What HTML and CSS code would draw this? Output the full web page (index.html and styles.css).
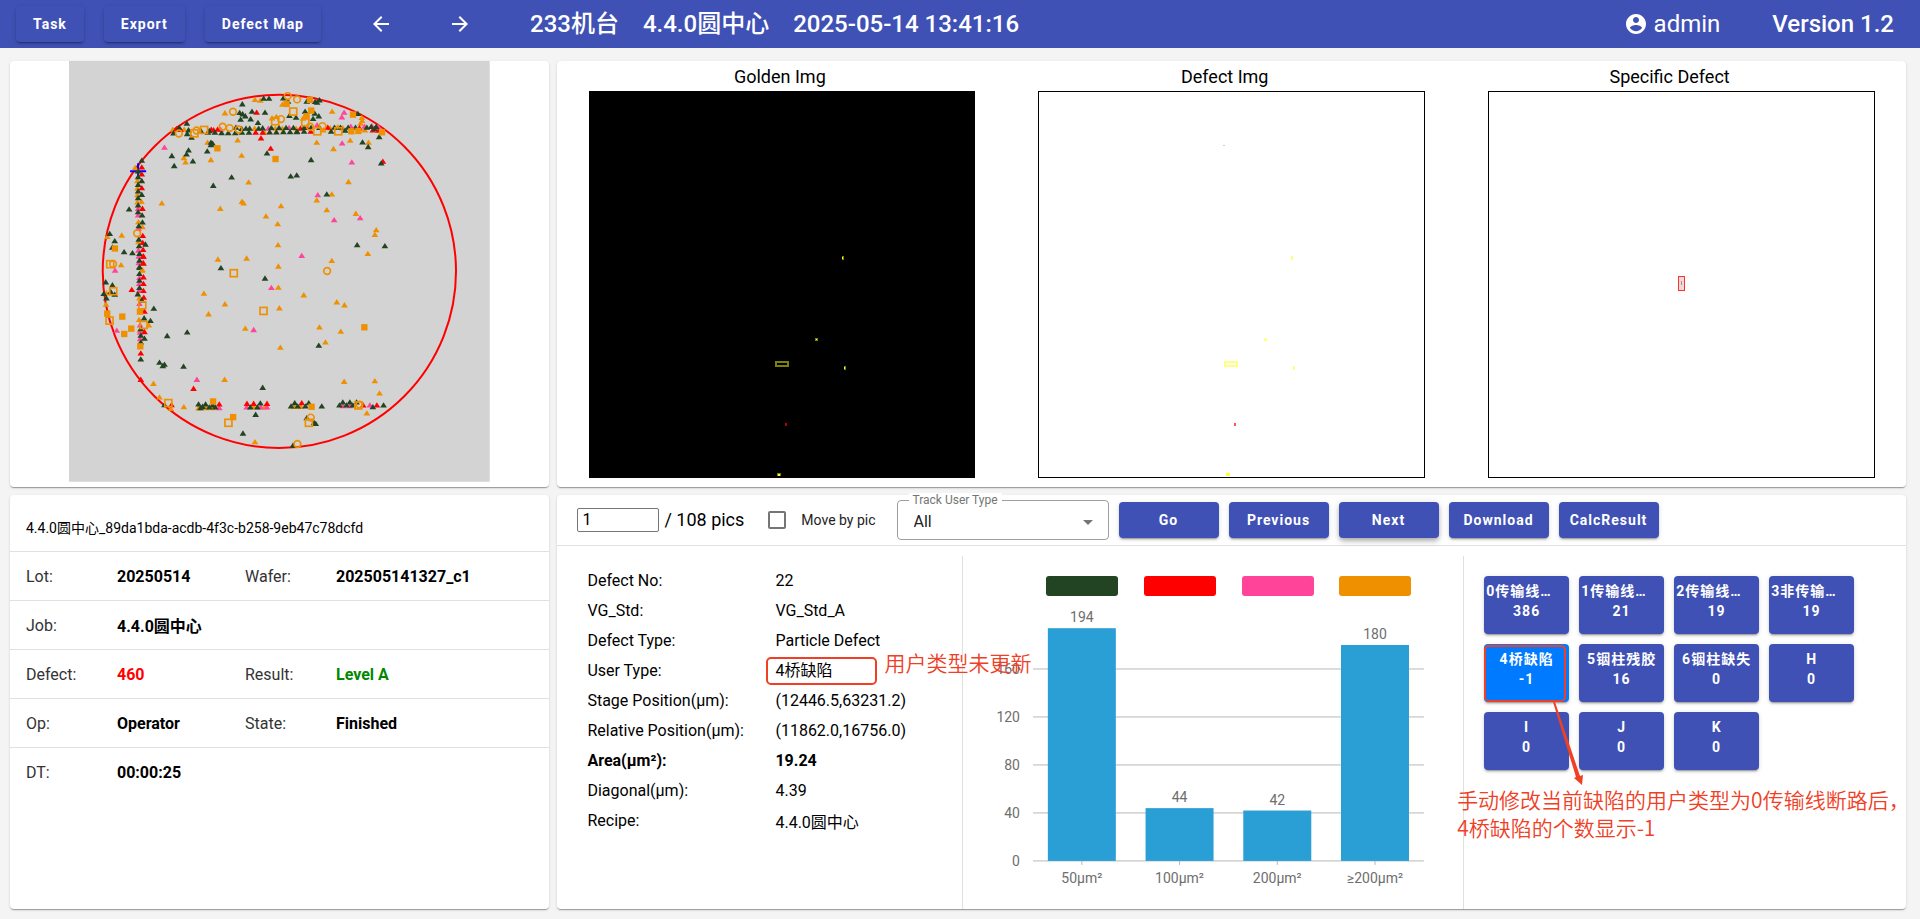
FILE: index.html
```html
<!DOCTYPE html>
<html lang="zh-CN">
<head>
  <meta charset="UTF-8">
  <meta name="viewport" content="width=device-width, initial-scale=1">
  <title>Defect Review</title>
  <link rel="stylesheet" href="styles.css">
</head>
<body>

  <!-- Top bar -->
  <header class="topbar">
    <nav class="topbar-nav">
      <button class="btn">Task</button>
      <button class="btn">Export</button>
      <button class="btn">Defect Map</button>
    </nav>
    <button class="icon-btn" aria-label="Previous page">
      <svg viewBox="0 0 24 24"><path d="M20 11H7.83l5.59-5.59L12 4l-8 8 8 8 1.41-1.41L7.83 13H20v-2z"/></svg>
    </button>
    <button class="icon-btn" aria-label="Next page">
      <svg viewBox="0 0 24 24"><path d="M12 4l-1.41 1.41L16.17 11H4v2h12.17l-5.58 5.59L12 20l8-8z"/></svg>
    </button>
    <h1 class="topbar-title"><span>233机台</span><span>4.4.0圆中心</span><span>2025-05-14 13:41:16</span></h1>
    <div class="user">
      <svg viewBox="0 0 24 24"><path d="M12 2C6.48 2 2 6.48 2 12s4.48 10 10 10 10-4.48 10-10S17.52 2 12 2zm0 3c1.66 0 3 1.34 3 3s-1.34 3-3 3-3-1.34-3-3 1.34-3 3-3zm0 14.2c-2.5 0-4.71-1.28-6-3.22.03-1.99 4-3.08 6-3.08 1.99 0 5.97 1.09 6 3.08-1.29 1.94-3.5 3.22-6 3.22z"/></svg>
      <span>admin</span>
    </div>
    <strong class="version">Version 1.2</strong>
  </header>

  <main class="board">

    <!-- Wafer map -->
    <section class="card wafer-card">
      <svg class="wafer" id="wafer" viewBox="0 0 1260 1260">
        <rect class="wafer-bg" width="1260" height="1260"/>
        <circle class="wafer-edge" cx="630" cy="630" r="529"/>
        <path class="wafer-cursor" d="M183 330h48M207 306v48"/>
      </svg>
    </section>

    <!-- Images -->
    <section class="card">
      <div class="captions">
        <span>Golden Img</span>
        <span>Defect Img</span>
        <span>Specific Defect</span>
      </div>
      <div class="images">
        <svg class="golden" viewBox="0 0 386 386" shape-rendering="crispEdges">
          <rect class="dim" x="253" y="165" width="2" height="4"/>
          <rect class="lit" x="253" y="166" width="1" height="2"/>
          <rect class="dim" x="226" y="247" width="3" height="3"/>
          <rect class="lit" x="227" y="248" width="1" height="1"/>
          <rect class="frame" x="187" y="271" width="12" height="4"/>
          <rect class="dim" x="255" y="275" width="2" height="4"/>
          <rect class="lit" x="255" y="276" width="1" height="2"/>
          <rect class="hot" x="196" y="332" width="2" height="3"/>
          <rect class="dim" x="188" y="382" width="4" height="3"/>
          <rect class="lit" x="189" y="383" width="2" height="2"/>
        </svg>
        <svg class="defect" viewBox="0 0 386 386" shape-rendering="crispEdges">
          <rect class="mote" x="185" y="53" width="2" height="1"/>
          <rect class="dim" x="253" y="165" width="2" height="4"/>
          <rect class="lit" x="253" y="166" width="1" height="2"/>
          <rect class="dim" x="226" y="247" width="3" height="3"/>
          <rect class="lit" x="227" y="248" width="1" height="1"/>
          <rect class="frame" x="187" y="271" width="12" height="4"/>
          <rect class="dim" x="255" y="275" width="2" height="4"/>
          <rect class="lit" x="255" y="276" width="1" height="2"/>
          <rect class="hot" x="196" y="332" width="2" height="3"/>
          <rect class="lit" x="188" y="382" width="4" height="3"/>
        </svg>
        <svg class="specific" viewBox="0 0 386 386" shape-rendering="crispEdges">
          <rect x="190" y="185" width="6" height="14"/>
          <path d="M193 190v4"/>
        </svg>
      </div>
    </section>

    <!-- Lot information -->
    <section class="card">
      <table class="lot">
        <colgroup><col class="c1"><col class="c2"><col class="c3"><col></colgroup>
        <tr class="lot-id"><td colspan="4">4.4.0圆中心_89da1bda-acdb-4f3c-b258-9eb47c78dcfd</td></tr>
        <tr><th>Lot:</th><td>20250514</td><th>Wafer:</th><td>202505141327_c1</td></tr>
        <tr><th>Job:</th><td colspan="3">4.4.0圆中心</td></tr>
        <tr><th>Defect:</th><td class="bad">460</td><th>Result:</th><td class="good">Level A</td></tr>
        <tr><th>Op:</th><td>Operator</td><th>State:</th><td>Finished</td></tr>
        <tr><th>DT:</th><td colspan="3">00:00:25</td></tr>
      </table>
    </section>

    <section class="card review">
      <!-- Toolbar -->
      <div class="toolbar">
        <input class="page-input" id="page" type="text" value="1">
        <label class="page-total" for="page">/ 108 pics</label>
        <input class="move-check" id="move" type="checkbox">
        <label class="move-label" for="move">Move by pic</label>
        <div class="select-box">
          <label for="track">Track User Type</label>
          <select id="track"><option>All</option></select>
          <svg viewBox="0 0 10 5"><path d="M0 0h10L5 5z"/></svg>
        </div>
        <div class="actions">
          <button class="btn">Go</button>
          <button class="btn">Previous</button>
          <button class="btn raised">Next</button>
          <button class="btn">Download</button>
          <button class="btn">CalcResult</button>
        </div>
      </div>

      <div class="panels">
        <!-- Current defect -->
        <div class="panel">
          <table class="detail">
            <tr><th>Defect No:</th><td>22</td></tr>
            <tr><th>VG_Std:</th><td>VG_Std_A</td></tr>
            <tr><th>Defect Type:</th><td>Particle Defect</td></tr>
            <tr><th>User Type:</th><td><div class="marked">4桥缺陷<span class="note note-type">用户类型未更新</span></div></td></tr>
            <tr><th>Stage Position(μm):</th><td>(12446.5,63231.2)</td></tr>
            <tr><th>Relative Position(μm):</th><td>(11862.0,16756.0)</td></tr>
            <tr class="strong"><th>Area(μm²):</th><td>19.24</td></tr>
            <tr><th>Diagonal(μm):</th><td>4.39</td></tr>
            <tr><th>Recipe:</th><td>4.4.0圆中心</td></tr>
          </table>
        </div>

        <!-- Size chart -->
        <div class="panel">
          <div class="swatches">
            <span class="swatch green"></span>
            <span class="swatch red"></span>
            <span class="swatch pink"></span>
            <span class="swatch orange"></span>
          </div>
          <svg class="chart" id="chart" viewBox="0 0 500 300"></svg>
        </div>

        <!-- User types -->
        <div class="panel">
          <div class="types">
            <button class="type long"><span>0传输线…</span><span>386</span></button>
            <button class="type long"><span>1传输线…</span><span>21</span></button>
            <button class="type long"><span>2传输线…</span><span>19</span></button>
            <button class="type long"><span>3非传输…</span><span>19</span></button>
            <button class="type active"><span>4桥缺陷</span><span>-1</span></button>
            <button class="type"><span>5铟柱残胶</span><span>16</span></button>
            <button class="type"><span>6铟柱缺失</span><span>0</span></button>
            <button class="type"><span>H</span><span>0</span></button>
            <button class="type"><span>I</span><span>0</span></button>
            <button class="type"><span>J</span><span>0</span></button>
            <button class="type"><span>K</span><span>0</span></button>
            <svg class="arrow" viewBox="0 0 32 84"><path d="M0 0h2l25 74 3-1-1 10-8-7 2-1z"/></svg>
          </div>
          <p class="note note-count">手动修改当前缺陷的用户类型为0传输线断路后，<br>4桥缺陷的个数显示-1</p>
        </div>
      </div>
    </section>
  </main>

  <script src="script.js"></script>
</body>
</html>
```
FILE: styles.css
```css
* {
  box-sizing: border-box;
}

body {
  margin: 0;
  min-height: 100vh;
  display: flex;
  flex-direction: column;
  background: #f4f4f4;
  color: #000;
  font-family: Roboto, "Noto Sans CJK SC", sans-serif;
  font-size: 16px;
}

button, input, select {
  font-family: inherit;
}

/* top bar */
.topbar {
  display: flex;
  align-items: center;
  height: 48px;
  padding: 0 26px 0 16px;
  background: #3f51b5;
  color: #fff;
  font-size: 24px;
}

.topbar-nav {
  display: flex;
  gap: 20px;
  margin-right: 48px;
}

.btn {
  height: 36px;
  padding: 0 17px;
  border: none;
  border-radius: 4px;
  background: #3f51b5;
  color: #fff;
  font-size: 14px;
  font-weight: 700;
  letter-spacing: 1px;
  box-shadow: 0 3px 1px -2px rgba(0, 0, 0, 0.2), 0 2px 2px rgba(0, 0, 0, 0.14), 0 1px 5px rgba(0, 0, 0, 0.12);
}

.icon-btn {
  width: 24px;
  height: 24px;
  margin-right: 55px;
  padding: 0;
  border: none;
  background: none;
}

.icon-btn svg, .user svg {
  display: block;
  width: 24px;
  height: 24px;
  fill: #fff;
}

.topbar-title {
  display: flex;
  align-items: baseline;
  gap: 24px;
  margin: 0 auto 0 3px;
  font-size: 24px;
  font-weight: 500;
  line-height: 32px;
}

.user {
  display: flex;
  align-items: center;
  gap: 6px;
  margin-right: 52px;
}

.version {
  font-weight: 500;
}

/* four cards */
.board {
  flex: 1;
  display: grid;
  grid-template-columns: 2fr 5fr;
  grid-template-rows: auto 1fr;
  gap: 8px;
  padding: 13px 14px 10px 10px;
}

.card {
  min-width: 0;
  background: #fff;
  border-radius: 4px;
  box-shadow: 0 2px 1px -1px rgba(0, 0, 0, 0.2), 0 1px 1px rgba(0, 0, 0, 0.14), 0 1px 3px rgba(0, 0, 0, 0.12);
}

.wafer-card {
  padding-bottom: 5px;
}

.wafer {
  display: block;
  width: 78%;
  margin: 0 auto;
}

.wafer-bg {
  fill: #d3d3d3;
}

.wafer-edge {
  fill: none;
  stroke: #f00;
  stroke-width: 6;
}

.wafer-cursor {
  stroke: #00f;
  stroke-width: 6;
}

.green { fill: #224422; background: #224422; }
.red { fill: #ff0000; background: #ff0000; }
.pink { fill: #ff4499; background: #ff4499; }
.orange { fill: #ee9000; background: #ee9000; }

.hollow {
  fill: none;
  stroke: #ee9000;
  stroke-width: 5;
}

/* images */
.captions, .images {
  display: grid;
  grid-template-columns: repeat(3, 1fr);
  justify-items: center;
}

.captions {
  padding: 2px 14px 0 0;
  font-size: 18px;
  line-height: 28px;
}

.images svg {
  display: block;
  width: 86%;
  border: 1px solid #000;
}

.golden { background: #000; }
.golden .dim { fill: #7f7f00; }
.golden .lit { fill: #ffff33; }
.golden .hot { fill: #b00000; }
.golden .frame { fill: none; stroke: #7f7f00; stroke-width: 2; }

.defect .dim { fill: #ffff99; }
.defect .lit { fill: #ffff33; }
.defect .hot { fill: #ff5555; }
.defect .mote { fill: #cccccc; }
.defect .frame { fill: none; stroke: #ffff80; stroke-width: 2; }

.specific rect { fill: #f3d8d8; stroke: #ff3030; }
.specific path { stroke: #999; }

/* lot information */
.lot {
  width: 100%;
  border-collapse: collapse;
  table-layout: fixed;
}

.lot .c1 { width: 107px; }
.lot .c2 { width: 128px; }
.lot .c3 { width: 91px; }

.lot tr {
  height: 49px;
  border-bottom: 1px solid #e0e0e0;
}

.lot tr:last-child {
  border-bottom: none;
}

.lot th, .lot td {
  padding: 0;
  text-align: left;
}

.lot th {
  font-weight: 400;
  color: #333;
}

.lot td {
  font-weight: 700;
}

.lot th:first-child {
  padding-left: 16px;
}

.lot .lot-id {
  height: 57px;
}

.lot .lot-id td {
  padding: 8px 0 0 16px;
  font-size: 14px;
  font-weight: 400;
}

.lot .bad { color: #f00; }
.lot .good { color: #008800; }

/* toolbar */
.review {
  display: flex;
  flex-direction: column;
}

.toolbar {
  display: flex;
  align-items: center;
  height: 51px;
  padding-left: 20px;
  border-bottom: 1px solid #e0e0e0;
}

.page-input {
  width: 82px;
  height: 24px;
  padding: 1px 4px;
  border: 1px solid #767676;
  border-radius: 2px;
  font-size: 16px;
}

.page-total {
  margin: 0 24px 0 5px;
  font-size: 18px;
}

.move-check {
  appearance: none;
  width: 18px;
  height: 18px;
  margin: 0 15px 0 0;
  border: 2px solid #757575;
  border-radius: 2px;
}

.move-check:checked {
  background: #3f51b5;
}

.move-label {
  margin-right: 21px;
  font-size: 14px;
  color: #222;
}

.select-box {
  position: relative;
  width: 212px;
  margin-right: 10px;
}

.select-box label {
  position: absolute;
  top: -7px;
  left: 12px;
  padding: 0 4px;
  background: #fff;
  color: #757575;
  font-size: 12px;
  line-height: 14px;
}

.select-box select {
  appearance: none;
  display: block;
  width: 100%;
  height: 40px;
  padding: 3px 16px 0;
  border: 1px solid #9e9e9e;
  border-radius: 4px;
  background: #fff;
  color: #222;
  font-size: 16px;
}

.select-box svg {
  position: absolute;
  top: 20px;
  right: 16px;
  width: 10px;
  height: 5px;
  fill: #757575;
}

.actions {
  display: flex;
  gap: 10px;
}

.actions .btn {
  width: 100px;
  padding: 0;
}

.actions .raised {
  box-shadow: 0 2px 4px -1px rgba(0, 0, 0, 0.2), 0 4px 5px rgba(0, 0, 0, 0.14), 0 1px 10px rgba(0, 0, 0, 0.12);
}

/* lower panels */
.panels {
  flex: 1;
  display: grid;
  grid-template-columns: 405fr 501fr 443fr;
  padding-top: 10px;
}

.panel {
  position: relative;
  min-width: 0;
  padding-top: 20px;
  border-left: 1px solid #e0e0e0;
}

.panel:first-child {
  padding: 10px 0 0 30px;
  border-left: none;
}

.detail {
  border-collapse: collapse;
}

.detail tr {
  height: 30px;
}

.detail th, .detail td {
  padding: 0;
  font-weight: 400;
  text-align: left;
  white-space: nowrap;
}

.detail th {
  width: 188px;
}

.detail .strong th, .detail .strong td {
  font-weight: 700;
}

.marked {
  position: relative;
  width: 111px;
  height: 28px;
  margin-left: -9px;
  padding-left: 7px;
  border: 2px solid #ef4026;
  border-radius: 5px;
  line-height: 24px;
}

.note {
  position: absolute;
  margin: 0;
  color: #ef4026;
  font-family: "Noto Sans CJK SC", sans-serif;
  font-size: 21px;
  font-weight: 350;
  line-height: 28px;
  white-space: nowrap;
}

.note-type {
  top: -11px;
  left: 116px;
  z-index: 1;
}

.note-count {
  top: 229px;
  left: -7px;
}

.swatches {
  display: grid;
  grid-template-columns: repeat(4, 1fr);
  justify-items: center;
  padding: 0 39px 0 70px;
}

.swatch {
  width: 72px;
  height: 20px;
  border-radius: 3px;
}

.chart {
  display: block;
  width: 100%;
}

.chart text {
  fill: #6e6e6e;
  font-size: 14px;
  text-anchor: middle;
}

.chart .tick {
  text-anchor: end;
}

.chart line {
  stroke: #b8b8b8;
}

.chart rect {
  fill: #2a9fd6;
}

.types {
  position: relative;
  display: grid;
  grid-template-columns: repeat(4, 85px);
  gap: 10px;
  padding-left: 20px;
}

.type {
  position: relative;
  display: flex;
  flex-direction: column;
  height: 58px;
  padding: 5px 2px;
  border: none;
  border-radius: 4px;
  background: #3f51b5;
  color: #fff;
  font-size: 14px;
  font-weight: 700;
  letter-spacing: 1px;
  line-height: 20px;
  box-shadow: 0 3px 1px -2px rgba(0, 0, 0, 0.2), 0 2px 2px rgba(0, 0, 0, 0.14), 0 1px 5px rgba(0, 0, 0, 0.12);
}

.type span {
  width: 100%;
  height: 20px;
  white-space: nowrap;
}

.type.long span:first-child {
  text-align: left;
}

.type.active {
  background: #007bff;
}

.type.active::after {
  content: "";
  position: absolute;
  inset: 1px 3px 0 0;
  border: 2px solid #ef4026;
  border-radius: 5px;
}

.arrow {
  position: absolute;
  top: 126px;
  left: 89px;
  width: 32px;
  height: 84px;
  fill: #ef4026;
}
```
FILE: script.js
```js
const NS = 'http://www.w3.org/2000/svg';

function add(parent, tag, attrs, text) {
  const el = document.createElementNS(NS, tag);
  for (const key in attrs) el.setAttribute(key, attrs[key]);
  if (text !== undefined) el.textContent = text;
  parent.appendChild(el);
}

// Defects, one block per quadrant: origin of the block, then x,y of each mark
const quadrants = [
  {
    dx: -30, dy: -3,
    green: '549,132 613,115 629,115 672,114 686,124 541,158 550,162 558,168 578,154 617,157 574,177 544,178 596,188 690,167 710,172 383,190 397,232 388,270 382,282 338,287 345,317 401,303 444,273 455,247 460,250 455,254 517,351 462,376 623,279 694,348 712,345 210,447 152,520 167,542 195,575 220,578 259,552 160,561 485,623 248,301 343,219 384,221 446,217 467,217 487,218 507,218 528,218 548,217 569,217 631,216 651,216 672,215 692,215 712,215 360,203 388,210 425,212 450,212 530,202 547,206 560,205 571,205 598,205 610,204 636,203 659,203 680,203 702,203 237,333 237,350 237,373 237,393 237,413 237,435 237,455 239,497 239,537 240,557 241,580 241,600 241,622 248,362 248,403 249,465 250,486',
    red: '592,157 352,206 364,209 456,208 475,208 463,210 589,217 610,217 605,234 634,265 248,321 248,342 248,383 250,445 251,526 251,547 252,568 252,588 252,608',
    pink: '316,262 627,205 689,203 237,445 237,465 238,505 238,570 239,588 239,608 484,208',
    orange: '587,119 603,121 497,159 341,208 535,240 547,286 455,299 445,247 374,293 379,306 568,366 308,429 483,445 548,424 553,429 620,468 665,437 655,491 656,554 657,618 476,597 562,594 188,525 145,529 186,614 638,174 651,170 669,133 375,208 586,205 615,217 648,205 669,205 710,205 235,362 235,384 235,404 235,426 247,424 238,485 250,500 238,545 250,629 228,323',
    circle: '521,155 665,177 685,108 713,118 490,200 511,204 538,208 359,220 412,211 234,519 162,611',
    square: '701,154 647,183 405,219 434,209 153,611',
    block: '474,264 648,296 681,131 167,564'
  },
  {
    dx: 630, dy: -3,
    green: '82,124 107,125 113,127 120,120 77,154 106,160 118,168 101,176 235,161 249,246 266,260 299,230 95,299 142,402 233,554 316,557 305,309 290,200 165,202 183,202 206,202 228,202 53,214 74,214 155,214 197,211 275,200 285,206 262,202 74,203 95,203 120,203',
    red: '63,205 82,203 94,214 145,202 310,304 280,210 240,204 297,211',
    pink: '194,157 187,171 113,195 188,249 217,306 115,404 164,479 242,473 67,586 214,199 255,199 277,198 296,199',
    orange: '158,154 247,173 248,182 112,247 162,266 212,241 267,247 207,365 157,402 112,420 142,449 229,460 290,509 286,523 265,580 157,601 71,175 77,167 175,201 132,210 152,204 190,204 256,210 243,190',
    circle: '92,200 129,198 143,632',
    square: '113,213 176,213 77,186',
    block: '91,119 95,151 81,168 220,163 215,213 236,212 307,216'
  },
  {
    dx: -30, dy: 567,
    green: '617,84 140,95 160,104 142,143 134,130 167,132 155,124 284,174 274,211 324,256 384,245 301,336 316,342 311,346 373,348 610,411 589,492 551,548 418,461 439,461 430,468 424,472 450,470 460,464 468,470 573,470 594,470 603,458 316,463 255,203 256,264 245,255 245,326 248,149 236,131 241,50 241,70 241,90 241,112 245,235 245,275',
    red: '218,118 253,18 253,39 253,80 253,100 253,121 254,141 256,183 256,244 245,308 245,387 403,414 480,461 563,459 583,459 623,459 337,463',
    pink: '168,60 173,240 636,112 583,238 413,387 480,472 562,470 604,470 623,470 241,82 240,100 240,121 241,160 243,224 243,246 243,265',
    orange: '434,129 497,161 448,191 558,234 657,111 660,173 663,291 496,387 283,399 301,440 374,469 335,474 587,574 142,128 141,162 269,224 240,208 248,60 241,143 242,240 418,473 440,472 460,472 615,470 583,469',
    circle: '',
    square: '523,68 612,181 162,122 151,210 249,164 253,223 327,457 507,516',
    block: '144,189 189,198 216,234 195,250 242,183 461,452 521,499 243,287'
  },
  {
    dx: 630, dy: 567,
    green: '118,285 46,457 88,457 35,467 55,467 78,467 127,467 82,502 109,519 104,516 41,584 190,455 211,455 231,455 180,464 201,464 220,464 280,469 312,464',
    red: '67,457 251,464 292,464',
    pink: '190,466 211,466 271,464',
    orange: '73,134 172,155 195,164 120,230 184,243 138,275 194,393 286,391 300,428 262,488 44,468 64,468',
    circle: '94,501 54,580 240,462',
    square: '88,516 236,464',
    block: '254,230 96,468'
  }
];

const wafer = document.getElementById('wafer');

for (const q of quadrants) {
  const each = (list, draw) => {
    for (const pair of list.split(' ').filter(Boolean)) {
      const [x, y] = pair.split(',').map(Number);
      draw(x + q.dx, y + q.dy);
    }
  };
  for (const color of ['orange', 'pink', 'red', 'green']) {
    each(q[color], (x, y) => add(wafer, 'path', { class: color, d: `M${x} ${y - 9}l10 16h-20z` }));
  }
  each(q.circle, (x, y) => add(wafer, 'circle', { class: 'hollow', cx: x, cy: y, r: 10 }));
  each(q.square, (x, y) => add(wafer, 'rect', { class: 'hollow', x: x - 10, y: y - 10, width: 21, height: 21 }));
  each(q.block, (x, y) => add(wafer, 'rect', { class: 'orange', x: x - 9, y: y - 9, width: 19, height: 19 }));
}

// Size chart
const sizes = [['50μm²', 194], ['100μm²', 44], ['200μm²', 42], ['≥200μm²', 180]];
const chart = document.getElementById('chart');
const left = 70, right = 461, base = 265, unit = 1.2;
const step = (right - left) / sizes.length;

for (let v = 0; v <= 160; v += 40) {
  const y = base - v * unit;
  add(chart, 'line', { x1: left, x2: right, y1: y, y2: y });
  add(chart, 'text', { class: 'tick', x: left - 13, y: y + 5 }, v);
}

sizes.forEach(([name, count], i) => {
  const x = left + step * (i + 0.5);
  const h = count * unit;
  add(chart, 'rect', { x: x - 34, y: base - h, width: 68, height: h });
  add(chart, 'line', { x1: x, x2: x, y1: base, y2: base + 4 });
  add(chart, 'text', { x: x, y: base - h - 6 }, count);
  add(chart, 'text', { x: x, y: base + 22 }, name);
});
```
